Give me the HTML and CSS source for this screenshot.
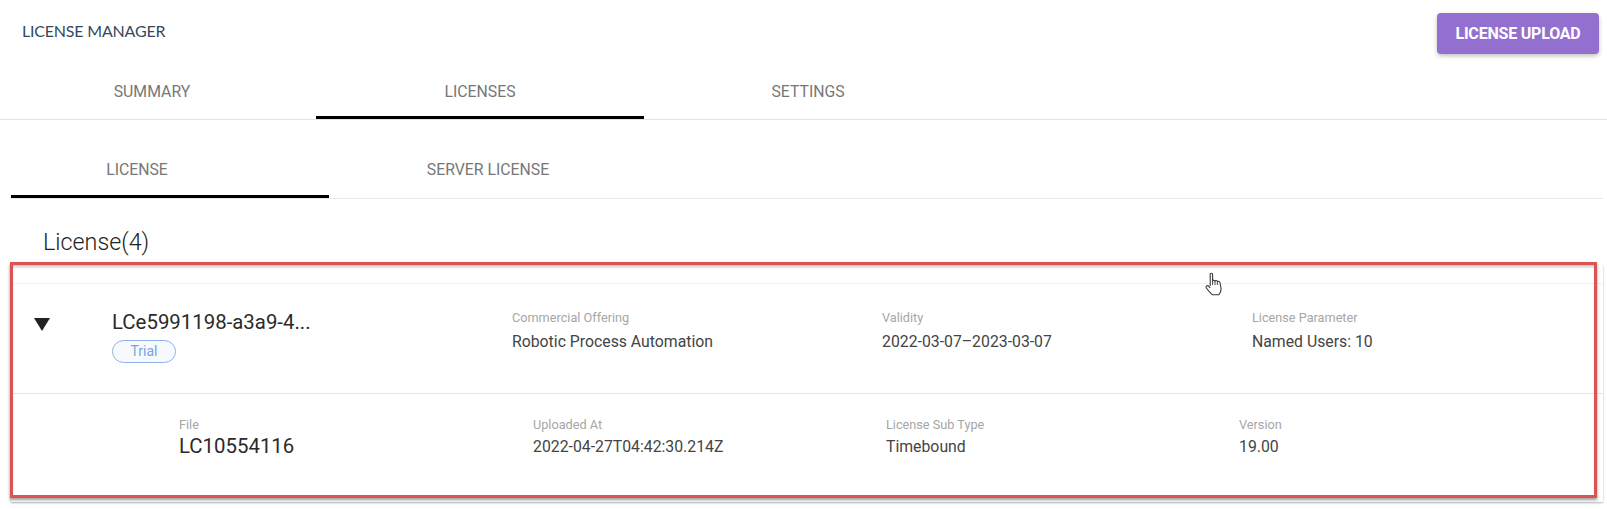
FILE: index.html
```html
<!DOCTYPE html>
<html lang="en">
<head>
    <meta charset="UTF-8">
    <title>License Manager</title>
    <link rel="stylesheet" href="styles.css">
</head>
<body>

    <div class="top-bar">
        <span class="page-title">LICENSE MANAGER</span>
        <button class="upload-btn">LICENSE UPLOAD</button>
    </div>

    <div class="main-tabs">
        <div class="main-tab">SUMMARY</div>
        <div class="main-tab active">LICENSES</div>
        <div class="main-tab">SETTINGS</div>
    </div>

    <div class="sub-tabs">
        <div class="sub-tab active"><span>LICENSE</span></div>
        <div class="sub-tab">SERVER LICENSE</div>
    </div>

    <h2 class="section-title">License(4)</h2>

    <div class="license-card">
        <div class="license-row">
            <div class="arrow-cell"><span class="arrow"></span></div>
            <div>
                <div class="license-name">LCe5991198-a3a9-4...</div>
                <span class="trial-pill">Trial</span>
            </div>
            <div class="field">
                <div class="field-label">Commercial Offering</div>
                <div class="field-value">Robotic Process Automation</div>
            </div>
            <div class="field">
                <div class="field-label">Validity</div>
                <div class="field-value">2022-03-07–2023-03-07</div>
            </div>
            <div class="field">
                <div class="field-label">License Parameter</div>
                <div class="field-value">Named Users: 10</div>
            </div>
        </div>

        <div class="detail-row">
            <div class="field">
                <div class="field-label">File</div>
                <div class="file-name">LC10554116</div>
            </div>
            <div class="field">
                <div class="field-label">Uploaded At</div>
                <div class="field-value">2022-04-27T04:42:30.214Z</div>
            </div>
            <div class="field">
                <div class="field-label">License Sub Type</div>
                <div class="field-value">Timebound</div>
            </div>
            <div class="field">
                <div class="field-label">Version</div>
                <div class="field-value">19.00</div>
            </div>
        </div>
    </div>

    <!-- annotation and mouse pointer lying over the screenshot -->
    <div class="red-box"></div>
    <svg class="hand-cursor" width="18" height="24" viewBox="0 0 18 24">
        <path d="M5.2 14 V2.6 C5.2 0.8 7.6 0.8 7.6 2.6 V9.2 C7.8 7.8 9.9 7.8 10 9.4 C10.2 8.2 12.2 8.2 12.4 9.8 C12.7 8.9 14.8 9 15 10.8 L16 16 C16.4 19.2 15.4 21 13.8 22.8 L7.4 22.8 C5.6 21.2 3.4 18.8 1.4 16 C0.4 14.4 2.2 13 3.4 14 L5.2 15.8"
              fill="#fff" stroke="#3a3a3a" stroke-width="1.1" stroke-linejoin="round"/>
        <path d="M7.6 9 V13 M10 9.4 V13 M12.4 9.8 V13" fill="none" stroke="#3a3a3a" stroke-width="0.9"/>
    </svg>

</body>
</html>
```

FILE: styles.css
```css
/* Basic Reset & Page Styling */
*, *::before, *::after {
    box-sizing: border-box;
    margin: 0;
    padding: 0;
}

body {
    position: relative;
    height: 509px;
    overflow: hidden;
    background-color: #fff;
    font-family: 'Roboto', sans-serif;
    color: #333;
}

/* Top Bar */
.top-bar {
    display: flex;
    align-items: flex-start;
    justify-content: space-between;
    height: 63px;
    padding: 13px 8px 0 22px;
}

.page-title {
    margin-top: 8px;
    font-family: 'Lato', sans-serif;
    font-size: 16px;
    line-height: 20px;
    letter-spacing: -0.2px;
    color: #34495e;
}

.upload-btn {
    width: 162px;
    height: 41px;
    border: none;
    border-radius: 4px;
    background-color: #9370cf;
    box-shadow: 0 2px 4px rgba(0, 0, 0, 0.25);
    font-family: 'Roboto', sans-serif;
    font-size: 16px;
    font-weight: 700;
    letter-spacing: -0.2px;
    color: #fff;
}

/* Main Tabs */
.main-tabs {
    display: flex;
    height: 57px;
    margin-left: -12px;
    border-bottom: 1px solid #e4e4e4;
}

.main-tab {
    width: 328px;
    height: 56px;
    font-size: 15.8px;
    line-height: 57px;
    text-align: center;
    color: #777;
}

.main-tab.active {
    border-bottom: 3px solid #000;
}

/* Sub Tabs */
.sub-tabs {
    display: flex;
    height: 56px;
    margin: 23px 4px 0 11px;
    border-bottom: 1px solid #e8e8e8;
}

.sub-tab {
    width: 318px;
    height: 55px;
    font-size: 15.8px;
    line-height: 54px;
    text-align: center;
    color: #777;
}

.sub-tab.active {
    padding-right: 66px;
    border-bottom: 3px solid #000;
}

/* Section Title */
.section-title {
    height: 66px;
    padding: 30px 0 0 43px;
    font-size: 23.3px;
    font-weight: 300;
    line-height: 26px;
    color: #222;
}

/* License Card */
.license-card {
    height: 237px;
    margin: 0 4px 0 11px;
    padding-top: 18px;
    box-shadow: 0 1px 2px rgba(0, 0, 0, 0.3);
}

.license-row {
    display: grid;
    grid-template-columns: 101px 400px 370px 370px 1fr;
    height: 111px;
    padding-top: 26px;
    border-top: 1px solid #f2f2f2;
    border-bottom: 1px solid #e6e6e6;
}

.arrow-cell {
    padding: 8px 0 0 23px;
}

.arrow {
    display: block;
    width: 0;
    height: 0;
    border-left: 8px solid transparent;
    border-right: 8px solid transparent;
    border-top: 13px solid #222;
}

.license-name {
    font-size: 20.4px;
    line-height: 24px;
    color: #2a2a2a;
}

.trial-pill {
    display: block;
    width: 64px;
    height: 23px;
    margin-top: 6px;
    border: 1px solid #8fb2e6;
    border-radius: 12px;
    background-color: #f6f9fe;
    font-size: 14px;
    line-height: 21px;
    text-align: center;
    color: #7ba2df;
}

.field-label {
    font-size: 12.7px;
    line-height: 16px;
    color: #a6a6a6;
}

.field-value {
    margin-top: 6px;
    font-size: 15.8px;
    line-height: 20px;
    color: #444;
}

.detail-row {
    display: grid;
    grid-template-columns: 354px 353px 353px 1fr;
    padding: 23px 0 0 168px;
}

.detail-row .field-value {
    margin-top: 4px;
}

.file-name {
    font-size: 20.4px;
    line-height: 26px;
    color: #2a2a2a;
}

/* Overlays */
.red-box {
    position: absolute;
    left: 10px;
    top: 262px;
    width: 1587px;
    height: 236px;
    border: 3px solid #dc5353;
    box-shadow: 0 2px 3px rgba(0, 0, 0, 0.4), inset 0 3px 3px -1px rgba(0, 0, 0, 0.22);
}

.hand-cursor {
    position: absolute;
    left: 1205px;
    top: 272px;
}
```
